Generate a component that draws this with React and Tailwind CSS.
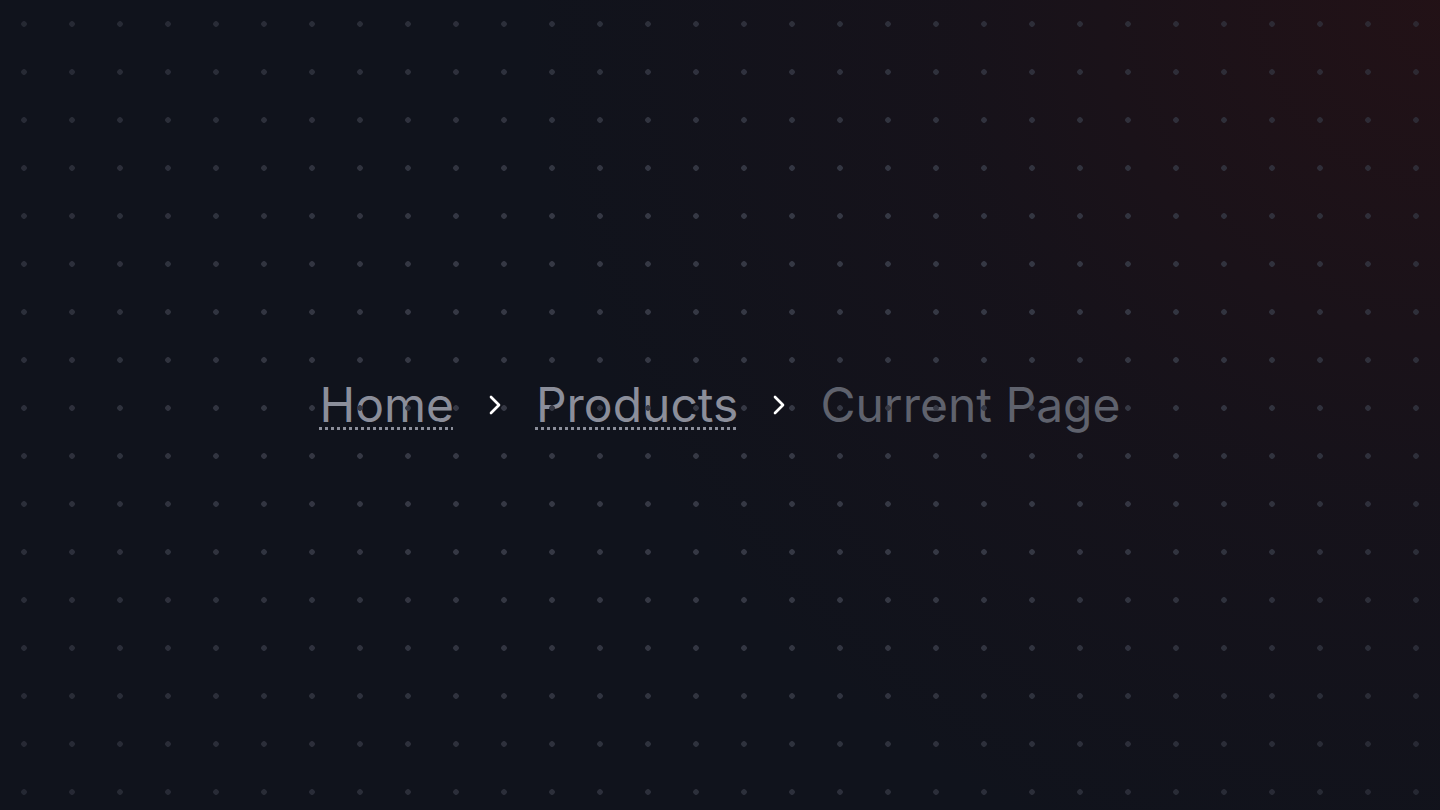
import { ChevronRight } from "lucide-react";

const crumbs = [
  { label: "Home", href: "#" },
  { label: "Products", href: "#" },
  { label: "Current Page" }
];

export default function App() {
  return (
    <div className="relative flex h-[810px] w-full items-center justify-center overflow-hidden bg-[#10131c] font-['Inter',sans-serif]">
      <div className="pointer-events-none absolute inset-0 bg-[radial-gradient(circle_1150px_at_100%_0%,rgba(42,17,20,0.7),rgba(30,17,24,0.4)_45%,transparent_80%)]" />
      <nav aria-label="Breadcrumb" className="relative">
        <ol className="flex items-center gap-[25px] text-[48px] leading-none">
          {crumbs.map((crumb, i) => (
            <li key={crumb.label} className="flex items-center gap-[25px]">
              {crumb.href ? (
                <a href={crumb.href} className="text-[#8b8e9a] underline decoration-dotted decoration-[3px] underline-offset-[5px]">
                  {crumb.label}
                </a>
              ) : (
                <span className="text-[#5f626d]">{crumb.label}</span>
              )}
              {i < crumbs.length - 1 && <ChevronRight size={32} strokeWidth={2} className="text-white" />}
            </li>
          ))}
        </ol>
      </nav>
      {/* dot grid sits over everything */}
      <div className="pointer-events-none absolute inset-0 bg-[radial-gradient(circle,#353844_2.5px,transparent_3.1px)] bg-[size:48px_48px] [mask-image:radial-gradient(ellipse_75%_75%_at_50%_50%,black_35%,rgba(0,0,0,0.5)_100%)]" />
    </div>
  );
}
